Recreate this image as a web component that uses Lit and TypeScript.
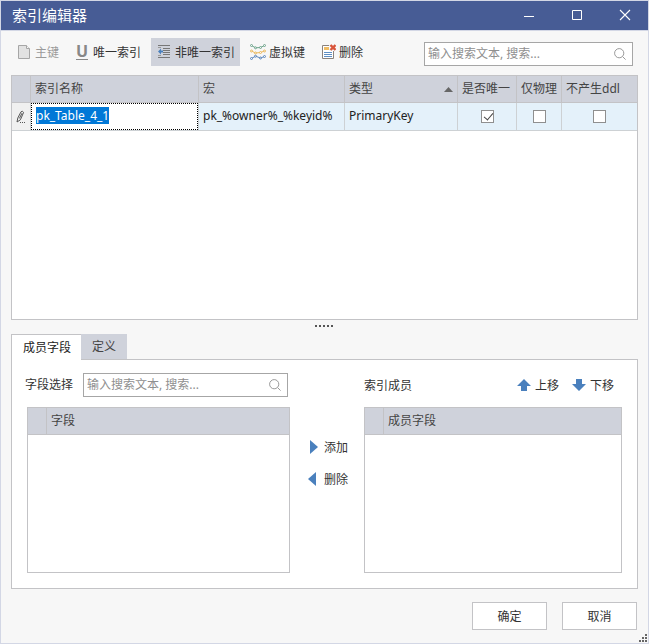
import { LitElement, html, css, svg } from "lit";
import { customElement, query, state } from "lit/decorators.js";
import { classMap } from "lit/directives/class-map.js";

interface IndexRow {
  name: string;
  macro: string;
  type: string;
  unique: boolean;
  physical: boolean;
  noDdl: boolean;
}

const icon = (w: number, h: number, body: unknown) =>
  html`<svg width=${w} height=${h} viewBox="0 0 ${w} ${h}" aria-hidden="true">${body}</svg>`;

const magnifier = icon(12, 12, svg`
  <g fill="none" stroke="#9a9a9a"><circle cx="5.2" cy="5.2" r="4.6"/><path d="M8.5 8.5 11.6 11.6"/></g>`);

const pageIcon = icon(16, 16, svg`
  <path d="M2.5 1.5h8l3 3v10h-11z" fill="#e2e2e2" stroke="#a6a6a6"/>
  <path d="M10.5 1.5v3h3" fill="#f7f7f7" stroke="#a6a6a6"/>`);

const listIcon = icon(16, 16, svg`
  <path d="M2 1.5h12M7 4.5h7M7 6.5h7M7 8.5h7M7 10.5h7M2 13.5h12" stroke="#777" fill="none"/>
  <path d="M2 3.5h3M2 11.5h3" stroke="#999"/>
  <path d="M2 7.5 5 4.5v2h2v2H5v2z" fill="#4a80bd"/>`);

const wave = (color: string, pts: number[][]) => svg`
  <path d=${"M" + pts.map((p) => p.join(" ")).join("L")} fill="none" stroke=${color}/>
  ${pts.map((p) => svg`<circle cx=${p[0]} cy=${p[1]} r="1" fill="#f7f7f7" stroke=${color}/>`)}`;

const virtualIcon = icon(16, 16, svg`
  ${wave("#6fa58c", [[1.5, 1.5], [5.5, 3.8], [10.5, 3.5], [14.5, 1.5]])}
  ${wave("#ecb95c", [[1.5, 7], [5.5, 9], [10.5, 8.5], [14.5, 7]])}
  ${wave("#5b86bd", [[1.5, 14.5], [5.5, 12.2], [10.5, 14], [14.5, 12.5]])}`);

const deleteIcon = icon(16, 16, svg`
  <path d="M2.5 1.5h11v13h-11z" fill="#fff" stroke="#8a827d"/>
  <path d="M4 3h5v3H4z" fill="#f0bd64"/>
  <path d="M4 8.5h8M4 10.5h8M4 12.5h8" stroke="#5f8fc4"/>
  <path d="M9 0h7v7H9z" fill="#f7f7f7"/>
  <path d="m10.5 1 5 5m0-5-5 5" stroke="#d9553b" stroke-width="2.4"/>`);

const pencil = icon(10, 14, svg`
  <path d="M1 12 1.8 8 5 1.8Q6.4.5 7.6 2.4L4.4 9.8 1 12M3.4 8.4 6 3.2" fill="none" stroke="#555"/>
  <path d="M4 12h1v1H4zM6 12h1v1H6zM8 12h1v1H8z" fill="#555"/>`);

@customElement("app-root")
export class AppRoot extends LitElement {
  @state() private rows: IndexRow[] = [
    { name: "pk_Table_4_1", macro: "pk_%owner%_%keyid%", type: "PrimaryKey", unique: true, physical: false, noDdl: false },
  ];
  @state() private tab = 0;
  @query(".edit") private editor!: HTMLInputElement;

  firstUpdated() {
    this.editor.focus();
    this.editor.select();
  }

  static styles = css`
    :host {
      display: flex;
      flex-direction: column;
      box-sizing: border-box;
      min-height: 100vh;
      position: relative;
      border: 1px solid #d3d7e5;
      background: #f7f7f7;
      color: #333;
      font: 12px/16px "Noto Sans", "Noto Sans CJK SC", sans-serif;
    }
    * { box-sizing: border-box; }
    svg { display: block; flex: none; }
    button, input { font: inherit; color: inherit; }
    button { border: 0; background: none; padding: 0; display: flex; align-items: center; white-space: nowrap; }
    .titlebar { display: flex; height: 30px; background: #475c95; border-bottom: 1px solid #d3d7e5; color: #fff; }
    .titlebar h1 { flex: 1; margin: 0; padding-left: 11px; font-size: 15px; font-weight: 400; line-height: 29px; }
    .titlebar button { width: 48px; justify-content: center; padding-bottom: 2px; }
    .titlebar button:last-child { width: 47px; }
    main { flex: 1; display: flex; flex-direction: column; padding: 0 10px; }
    .toolbar { display: flex; align-items: flex-end; gap: 5px; padding: 7px 5px 9px 0; }
    .tool { height: 28px; padding: 0 5px; gap: 3px; }
    .tool.active { background: #cfd2db; }
    .tool:disabled { color: #9a9a9a; }
    .caption { padding-top: 2px; }
    .u { width: 12px; margin: 0 2px; border-bottom: 1px solid #888; color: #888; font: bold 16px/15px "Noto Sans", sans-serif; text-align: center; }
    .search { display: flex; align-items: center; height: 24px; border: 1px solid #a6a6a6; background: #fff; padding: 0 6px 0 3px; }
    .search input { flex: 1; min-width: 0; border: 0; padding: 0; outline: 0; background: none; }
    .search input::placeholder { color: #8f8f8f; opacity: 1; }
    .toolbar .search { margin-left: auto; width: 209px; }
    .grid { border: 1px solid #c3c3c6; background: #fff; }
    .indexes { flex: 1 0 200px; }
    table { width: 100%; table-layout: fixed; border-collapse: separate; border-spacing: 0; }
    th, td { padding: 0 4px; text-align: left; font-weight: 400; white-space: nowrap; border: solid #c3c3c6; border-width: 0 1px 1px 0; }
    th:last-child, td:last-child { border-right: 0; }
    th { height: 27px; background: #cfd2db; color: #444; }
    td { height: 28px; background: #e4f1fa; border-color: #cdd1d4; color: #222; }
    .mark { width: 19px; }
    td.mark { background: #f0f0f0; }
    td.mark svg { margin: 0 auto; }
    .macro { width: 146px; }
    .type { width: 113px; }
    .unique { width: 59px; }
    .physical { width: 45px; }
    .ddl { width: 75px; }
    .sorted { display: flex; align-items: center; justify-content: space-between; }
    td.cell { padding: 0; }
    .edit { display: block; width: 100%; height: 27px; border: 1px dotted #000; padding: 0 4px 2px; outline: 0; border-radius: 0; background: #fff; }
    .edit::selection { background: #0078d7; color: #fff; }
    td.value { padding-bottom: 2px; }
    input[type="checkbox"] { appearance: none; display: block; margin: 0 auto; width: 13px; height: 13px; border: 1px solid #8f8f8f; background: #fff; }
    input[type="checkbox"]:checked::before { content: ""; display: block; width: 4px; height: 8px; margin: 0 0 0 4px; border: solid #444; border-width: 0 1px 1px 0; transform: rotate(40deg); }
    .splitter { display: flex; justify-content: center; align-items: center; gap: 2px; height: 14px; padding: 0 2px 2px 0; }
    .splitter i { width: 2px; height: 2px; background: #555; }
    .tabs { display: flex; }
    .tab { height: 25px; padding: 0 11px; background: #cfd2db; color: #444; }
    .tab.current { height: 26px; position: relative; margin-bottom: -1px; padding-right: 10px; background: #fff; border: solid #c3c3c6; border-width: 1px 0 0 1px; color: #222; }
    .panel { display: flex; border: 1px solid #c3c3c6; background: #fff; padding: 13px 15px 15px; }
    .left { flex: 263 1 0; min-width: 0; }
    .right { flex: 258 1 0; min-width: 0; }
    .head { display: flex; align-items: center; height: 24px; margin-bottom: 10px; }
    .left .head { gap: 10px; margin-left: -2px; margin-right: 2px; }
    .left .search { flex: 1; }
    .right .head { gap: 12px; padding-right: 8px; }
    .right .title { flex: 1; }
    .move { gap: 3px; }
    .members { height: 166px; }
    .transfer { flex: none; width: 74px; padding: 58px 0 0 18px; }
    .transfer button { height: 32px; gap: 4px; }
    .footer { display: flex; justify-content: flex-end; gap: 15px; padding: 13px 11px 13px; }
    .footer button { width: 75px; height: 28px; padding-top: 2px; justify-content: center; border: 1px solid #c3c3c6; background: #fff; }
    .grip { position: absolute; right: 0; bottom: 0; }
  `;

  private toggle(i: number, key: "unique" | "physical" | "noDdl") {
    this.rows = this.rows.map((r, n) => (n === i ? { ...r, [key]: !r[key] } : r));
  }

  private search() {
    return html`<label class="search">
      <input type="text" aria-label="搜索" placeholder="输入搜索文本, 搜索..." />${magnifier}
    </label>`;
  }

  private list(title: string) {
    return html`<div class="grid members">
      <table><thead><tr><th class="mark"></th><th>${title}</th></tr></thead></table>
    </div>`;
  }

  private check(i: number, key: "unique" | "physical" | "noDdl", label: string) {
    return html`<td>
      <input type="checkbox" aria-label=${label} .checked=${this.rows[i][key]} @change=${() => this.toggle(i, key)} />
    </td>`;
  }

  render() {
    const caption = (t: string) => html`<span class="caption">${t}</span>`;
    return html`
      <header class="titlebar">
        <h1>索引编辑器</h1>
        <button aria-label="最小化">${icon(12, 12, svg`<path d="M1 7.5h10" stroke="#fff"/>`)}</button>
        <button aria-label="最大化">${icon(12, 12, svg`<path d="M1.5 1.5h9v9h-9z" fill="none" stroke="#fff"/>`)}</button>
        <button aria-label="关闭">${icon(12, 12, svg`<path d="m1 1 10 10M11 1 1 11" stroke="#fff" stroke-width="1.1"/>`)}</button>
      </header>
      <main>
        <div class="toolbar" role="toolbar">
          <button class="tool" disabled>${pageIcon}${caption("主键")}</button>
          <button class="tool"><span class="u" aria-hidden="true">U</span>${caption("唯一索引")}</button>
          <button class="tool active">${listIcon}${caption("非唯一索引")}</button>
          <button class="tool">${virtualIcon}${caption("虚拟键")}</button>
          <button class="tool">${deleteIcon}${caption("删除")}</button>
          ${this.search()}
        </div>
        <div class="grid indexes">
          <table>
            <thead>
              <tr>
                <th class="mark"></th>
                <th>索引名称</th>
                <th class="macro">宏</th>
                <th class="type"><div class="sorted">类型${icon(9, 5, svg`<path d="M0 5 4.5 0 9 5z" fill="#666"/>`)}</div></th>
                <th class="unique">是否唯一</th>
                <th class="physical">仅物理</th>
                <th class="ddl">不产生ddl</th>
              </tr>
            </thead>
            <tbody>
              ${this.rows.map((r, i) => html`<tr>
                <td class="mark">${pencil}</td>
                <td class="cell"><input class="edit" type="text" aria-label="索引名称" spellcheck="false" .value=${r.name} /></td>
                <td class="value">${r.macro}</td>
                <td class="value">${r.type}</td>
                ${this.check(i, "unique", "是否唯一")}
                ${this.check(i, "physical", "仅物理")}
                ${this.check(i, "noDdl", "不产生ddl")}
              </tr>`)}
            </tbody>
          </table>
        </div>
        <div class="splitter"><i></i><i></i><i></i><i></i><i></i></div>
        <div class="tabs" role="tablist">
          ${["成员字段", "定义"].map((t, i) => html`<button role="tab" aria-selected=${this.tab === i}
            class=${classMap({ tab: true, current: this.tab === i })} @click=${() => (this.tab = i)}>${t}</button>`)}
        </div>
        <section class="panel">
          <div class="left">
            <div class="head"><span>字段选择</span>${this.search()}</div>
            ${this.list("字段")}
          </div>
          <div class="transfer">
            <button>${icon(12, 16, svg`<path d="M2 1v14l8-7z" fill="#4a80bd"/>`)}${caption("添加")}</button>
            <button>${icon(12, 16, svg`<path d="M8 1v14L0 8z" fill="#4a80bd"/>`)}${caption("删除")}</button>
          </div>
          <div class="right">
            <div class="head">
              <span class="title caption">索引成员</span>
              <button class="move">${icon(16, 16, svg`<path d="m8 2 7 7h-4v5H5V9H1z" fill="#4a80bd"/>`)}${caption("上移")}</button>
              <button class="move">${icon(16, 16, svg`<path d="m8 14 7-7h-4V2H5v5H1z" fill="#4a80bd"/>`)}${caption("下移")}</button>
            </div>
            ${this.list("成员字段")}
          </div>
        </section>
      </main>
      <footer class="footer"><button>确定</button><button>取消</button></footer>
      <div class="grip">${icon(9, 9, svg`<path d="M6 0h2v2H6zM3 3h2v2H3zM6 3h2v2H6zM0 6h2v2H0zM3 6h2v2H3zM6 6h2v2H6z" fill="#666"/>`)}</div>
    `;
  }
}
